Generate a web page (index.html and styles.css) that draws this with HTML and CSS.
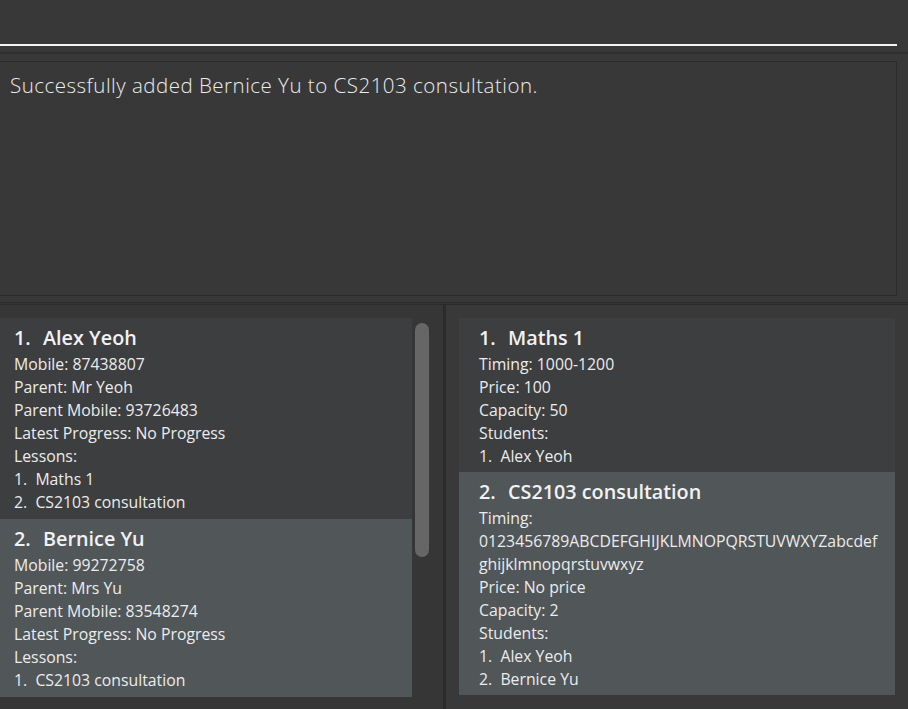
FILE: index.html
```html
<!DOCTYPE html>
<html>
<head>
<meta charset="utf-8">
<link rel="stylesheet" href="styles.css">
</head>
<body>
<div class="app">
  <div class="command-box"><div class="command-field"></div></div>
  <div class="band"></div>
  <div class="result-wrap">
    <div class="result-box">Successfully added Bernice Yu to CS2103 consultation.</div>
  </div>
  <div class="split-line"></div>
  <div class="lists">
    <div class="pane left-pane">
      <div class="list">
        <div class="card even">
          <div class="title"><span class="idx">1.</span>Alex Yeoh</div>
          <div class="line">Mobile: 87438807</div>
          <div class="line">Parent: Mr Yeoh</div>
          <div class="line">Parent Mobile: 93726483</div>
          <div class="line">Latest Progress: No Progress</div>
          <div class="line">Lessons:</div>
          <div class="line">1.&nbsp; Maths 1</div>
          <div class="line">2.&nbsp; CS2103 consultation</div>
        </div>
        <div class="card odd">
          <div class="title"><span class="idx">2.</span>Bernice Yu</div>
          <div class="line">Mobile: 99272758</div>
          <div class="line">Parent: Mrs Yu</div>
          <div class="line">Parent Mobile: 83548274</div>
          <div class="line">Latest Progress: No Progress</div>
          <div class="line">Lessons:</div>
          <div class="line">1.&nbsp; CS2103 consultation</div>
        </div>
      </div>
      <div class="scroll-track"><div class="thumb"></div></div>
    </div>
    <div class="vdivider"></div>
    <div class="pane right-pane">
      <div class="list rlist">
        <div class="card even">
          <div class="title"><span class="idx">1.</span>Maths 1</div>
          <div class="line">Timing: 1000-1200</div>
          <div class="line">Price: 100</div>
          <div class="line">Capacity: 50</div>
          <div class="line">Students:</div>
          <div class="line">1.&nbsp; Alex Yeoh</div>
        </div>
        <div class="card odd">
          <div class="title"><span class="idx">2.</span>CS2103 consultation</div>
          <div class="line">Timing:</div>
          <div class="line">0123456789ABCDEFGHIJKLMNOPQRSTUVWXYZabcdef</div>
          <div class="line">ghijklmnopqrstuvwxyz</div>
          <div class="line">Price: No price</div>
          <div class="line">Capacity: 2</div>
          <div class="line">Students:</div>
          <div class="line">1.&nbsp; Alex Yeoh</div>
          <div class="line">2.&nbsp; Bernice Yu</div>
        </div>
      </div>
    </div>
  </div>
</div>
</body>
</html>
```
FILE: styles.css
```css
html, body {
  margin: 0;
  padding: 0;
  background: #383838;
}
.app {
  width: 908px;
  height: 709px;
  overflow: hidden;
  display: flex;
  flex-direction: column;
  font-family: "Open Sans", "Noto Sans", sans-serif;
  color: #ffffff;
}
.command-box {
  height: 46px;
  padding-right: 11px;
}
.command-field {
  height: 44px;
  border-bottom: 2px solid #f4f4f4;
}
.band {
  margin-top: 6px;
  height: 2px;
  background: #2f2f2f;
}
.result-wrap {
  padding: 7px 11px 0 0;
}
.result-box {
  height: 235px;
  border: 1px solid #2b2b2b;
  border-left: none;
  padding: 9px 10px;
  font-weight: 300;
  font-size: 20.5px;
  letter-spacing: 0.5px;
  line-height: 28px;
  color: #ececec;
  box-sizing: border-box;
}
.split-line {
  margin-top: 6px;
  height: 1px;
  border-top: 1px solid #2b2b2b;
  border-bottom: 1px solid #2b2b2b;
  background: #333333;
}
.lists {
  flex: 1;
  display: flex;
  min-height: 0;
}
.pane {
  display: flex;
  padding-top: 13px;
  box-sizing: border-box;
}
.left-pane {
  width: 443px;
  background: #363636;
}
.list {
  display: flex;
  flex-direction: column;
}
.left-pane .list {
  width: 412px;
}
.scroll-track {
  width: 31px;
  padding: 5px 0 0 3px;
  box-sizing: border-box;
}
.thumb {
  width: 14px;
  height: 234px;
  border-radius: 7px;
  background: #666666;
}
.vdivider {
  width: 3px;
  background: #2b2b2b;
}
.right-pane {
  flex: 1;
  padding-left: 13px;
  padding-right: 13px;
  background: #393939;
}
.rlist {
  width: 436px;
}
.card {
  padding: 7px 14px 5px;
}
.rlist .card {
  padding-left: 20px;
  padding-right: 12px;
  padding-bottom: 4px;
}
.card.even {
  background: #3c3e3f;
}
.card.odd {
  background: #515658;
}
.title {
  font-weight: 600;
  font-size: 19.8px;
  line-height: 26px;
  margin-bottom: 2px;
  color: #f2f2f2;
}
.idx {
  display: inline-block;
  width: 29px;
}
.line {
  font-size: 15.8px;
  line-height: 23px;
  color: #ececec;
  word-break: break-all;
}
```
